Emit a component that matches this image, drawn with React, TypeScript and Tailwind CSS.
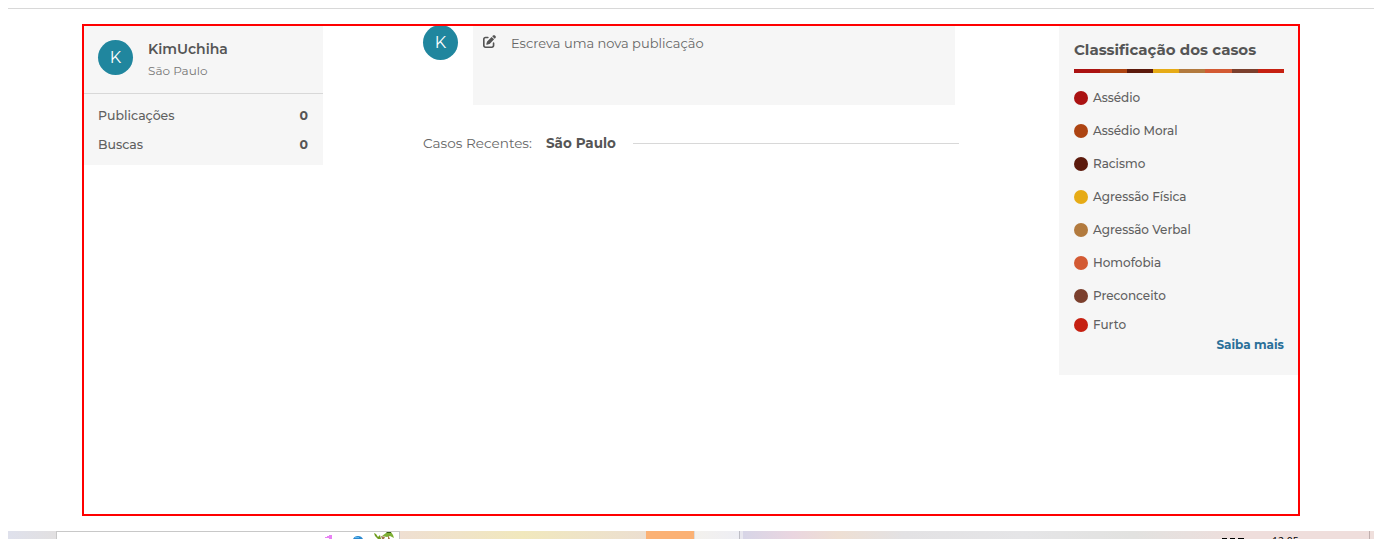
import { FaPenToSquare } from "react-icons/fa6";

const cases = [
  { name: "Assédio", dot: "bg-[#ab1212]" },
  { name: "Assédio Moral", dot: "bg-[#ad4412]" },
  { name: "Racismo", dot: "bg-[#5c1a0c]" },
  { name: "Agressão Física", dot: "bg-[#e6ab16]" },
  { name: "Agressão Verbal", dot: "bg-[#b27a3e]" },
  { name: "Homofobia", dot: "bg-[#d35a33]" },
  { name: "Preconceito", dot: "bg-[#7b3f2d]" },
  { name: "Furto", dot: "bg-[#c62011]" },
];

function Avatar() {
  return (
    <div className="flex h-[35px] w-[35px] shrink-0 items-center justify-center rounded-full bg-[#20869e] text-[16px] text-white">
      K
    </div>
  );
}

function ProfileCard() {
  return (
    <aside className="h-[139px] w-[239px] shrink-0 bg-[#f6f6f6]">
      <div className="flex h-[68px] gap-[15px] border-b border-[#d8d8d8] pt-[14px] pl-[14px]">
        <Avatar />
        <div>
          <div className="h-[19px] text-[14px] leading-[19px] font-semibold">KimUchiha</div>
          <div className="mt-[3px] h-[18px] text-[12px] leading-[18px] text-[#777]">São Paulo</div>
        </div>
      </div>
      <div className="flex flex-col pt-[7px] pr-[15px] pl-[14px] text-[12.5px] leading-[29px]">
        <div className="flex justify-between">
          <span className="font-medium text-[#606060]">Publicações</span>
          <b>0</b>
        </div>
        <div className="flex justify-between">
          <span className="font-medium text-[#606060]">Buscas</span>
          <b>0</b>
        </div>
      </div>
    </aside>
  );
}

function Feed() {
  return (
    <main className="ml-[100px] w-[536px] shrink-0">
      <div className="flex gap-[15px]">
        <div className="-mt-px">
          <Avatar />
        </div>
        <div className="flex h-[79px] w-[482px] bg-[#f6f6f6] pt-[9px] pl-[10px]">
          <FaPenToSquare className="h-[13px] w-[13px] text-[#555]" />
          <span className="-mt-px ml-[15px] h-[18px] text-[13px] leading-[18px] text-[#666]">
            Escreva uma nova publicação
          </span>
        </div>
      </div>
      <div className="mt-[28px] flex h-[20px] items-center text-[13.6px] leading-[20px]">
        <span className="w-[123px] text-[#666]">Casos Recentes:</span>
        <b className="w-[87px] text-[13.5px]">São Paulo</b>
        <div className="h-px flex-1 bg-[#d8d8d8]" />
      </div>
    </main>
  );
}

function CasesCard() {
  return (
    <aside className="ml-auto h-[349px] w-[239px] shrink-0 bg-[#f6f6f6] pt-[14px] pr-[14px] pl-[15px]">
      <h2 className="h-[20px] text-[15px] leading-[20px] font-bold whitespace-nowrap">
        Classificação dos casos
      </h2>
      <div className="mt-[9px] flex h-[4px]">
        {cases.map((c) => (
          <div key={c.name} className={`h-full flex-1 ${c.dot}`} />
        ))}
      </div>
      <ul className="mt-[18px]">
        {cases.map((c) => (
          <li key={c.name} className="mb-[19px] flex h-[14px] items-center gap-[5px] text-[12px] leading-[14px] font-medium text-[#606060] nth-[7]:mb-[15px] last:mb-0">
            <span className={`h-[14px] w-[14px] rounded-full ${c.dot}`} />
            <span>{c.name}</span>
          </li>
        ))}
      </ul>
      <div className="mt-[4px] text-right text-[12px] leading-[18px] font-bold text-[#2a7099]">Saiba mais</div>
    </aside>
  );
}

function Taskbar() {
  return (
    <footer className="mx-2 mt-[15px] flex h-[8px] overflow-hidden">
      <div className="w-[48px] bg-linear-to-r from-[#dfe1ec] to-[#e2e0e1]" />
      <div className="flex w-[344px] border border-b-0 border-[#c8c8c8] bg-white pl-[266px]">
        <svg width="76" height="7" viewBox="0 0 76 7">
          <path d="M2 5h2V4h2V3h3v4H6V6H2z" fill="#e882f4" />
          <path d="M30 7c1-2 2.500-3 5-3s4 1 5 3z" fill="#2b88cf" />
          <path d="M32 5h4v1h-4z" fill="#5db8ef" />
          <path d="M51 1l2 1 2 3 2-2 1 4h-3l-3-3z" fill="#6f9c1e" />
          <path d="M59 4l4-3 5-1 2 3 1 3-4-2-3 1z" fill="#7db034" />
          <path d="M58 4l4 1-1 2h-2zM65 3l2 4h-2z" fill="#a0764a" />
          <path d="M64 0h4v1h-5z" fill="#355a14" />
        </svg>
      </div>
      <div className="w-[246px] bg-linear-to-r from-[#efdfd2] via-[#f1e8bd] to-[#ecdfd1]" />
      <div className="w-[48px] bg-[#fbb174]" />
      <div className="w-px bg-[#dddddd]" />
      <div className="w-[44px] bg-linear-to-r from-[#f3f1ed] to-[#eeeef4]" />
      <div className="w-px bg-[#bdbdc5]" />
      <div className="w-[3px] bg-[#e8e7ef]" />
      <div className="flex flex-1 bg-[linear-gradient(90deg,#d7d5e7_0px,#ead6e0_50px,#eedfd3_95px,#e3e2e4_160px,#e5e5e7_280px,#e2e2e0_390px,#efdedc_500px,#efdedc_100%)] pl-[479px] text-[10.5px] leading-[12px] text-black">
        <div className="mt-[7px] flex h-px gap-[3px]">
          <i className="w-[5px] bg-black" />
          <i className="w-[5px] bg-black" />
          <i className="w-[6px] bg-black" />
        </div>
        <span className="mt-[4px] ml-[28px] font-['Open_Sans',sans-serif]">12:05</span>
      </div>
      <div className="w-px bg-[#bfaead]" />
      <div className="w-[4px] bg-[#efdfdc]" />
    </footer>
  );
}

export default function App() {
  return (
    <div className="h-[540px] overflow-hidden bg-white pt-[8px] font-[Montserrat,Inter,sans-serif] text-[#555]">
      <div className="mx-2 h-px bg-[#d8d8d8]" />
      <div className="mt-[15px] ml-[82px] flex h-[492px] w-[1218px] overflow-hidden border-2 border-[#ff0000]">
        <ProfileCard />
        <Feed />
        <CasesCard />
      </div>
      <Taskbar />
    </div>
  );
}
